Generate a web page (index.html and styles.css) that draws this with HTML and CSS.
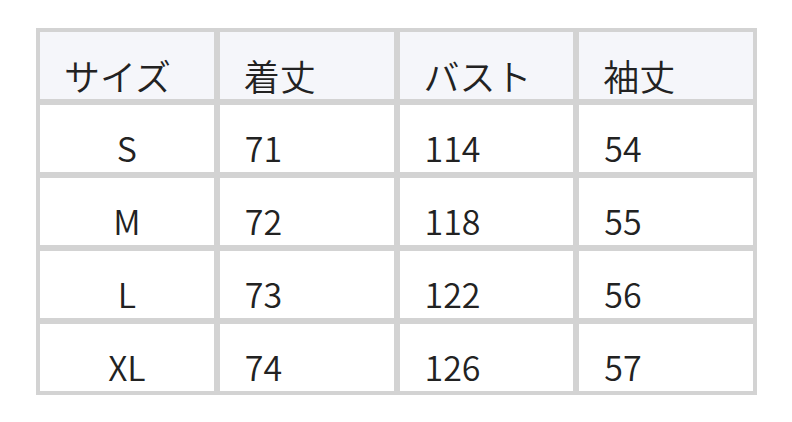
FILE: index.html
```html
<!DOCTYPE html>
<html lang="ja">
<head>
<meta charset="utf-8">
<link rel="stylesheet" href="styles.css">
</head>
<body>
<div class="size-table">
  <div class="cell head">サイズ</div>
  <div class="cell head">着丈</div>
  <div class="cell head">バスト</div>
  <div class="cell head">袖丈</div>

  <div class="cell center">S</div>
  <div class="cell">71</div>
  <div class="cell">114</div>
  <div class="cell">54</div>

  <div class="cell center">M</div>
  <div class="cell">72</div>
  <div class="cell">118</div>
  <div class="cell">55</div>

  <div class="cell center">L</div>
  <div class="cell">73</div>
  <div class="cell">122</div>
  <div class="cell">56</div>

  <div class="cell center">XL</div>
  <div class="cell">74</div>
  <div class="cell">126</div>
  <div class="cell">57</div>
</div>
</body>
</html>
```
FILE: styles.css
```css
html, body {
  margin: 0;
  padding: 0;
  background: #ffffff;
}
body {
  padding: 28px 0 0 36px;
  font-family: "Noto Sans CJK JP", "Noto Sans", sans-serif;
  color: #222222;
}
.size-table {
  width: 721px;
  height: 367px;
  box-sizing: border-box;
  background: #d3d3d3;
  padding: 4px;
  display: grid;
  grid-template-columns: repeat(4, 1fr);
  grid-template-rows: repeat(5, 67px);
  gap: 6px;
}
.cell {
  background: #ffffff;
  font-size: 34px;
  font-weight: 350;
  line-height: 49px;
  padding: 0 0 0 25px;
  display: flex;
  align-items: flex-end;
}
.cell.head {
  background: #f5f6fa;
  font-size: 36px;
  line-height: 48px;
  padding-left: 24px;
}
.cell.center {
  justify-content: center;
  padding: 0;
}
```
